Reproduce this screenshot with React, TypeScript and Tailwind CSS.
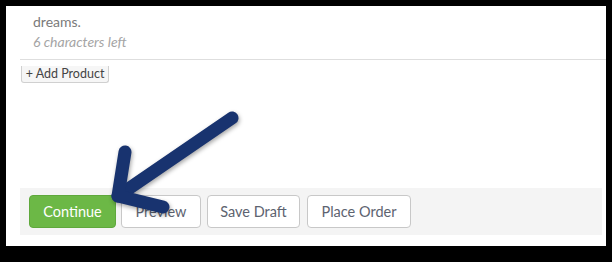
export default function App() {
  return (
    <div className="w-[612px] h-[262px] bg-black pt-[6px] pl-[6px] font-['Lato',sans-serif]">
      <div className="relative w-[600px] h-[240px] bg-white overflow-hidden">
        <div className="pl-[27px] pt-[6px] text-[14px] leading-[20px]">
          <p className="text-[#7a7a7a]">dreams.</p>
          <p className="italic text-[#a5a5a5]">6 characters left</p>
        </div>
        <div className="ml-[14px] mt-[7px] border-t border-[#dedede]">
          <button className="ml-[1px] h-[17px] w-[88px] -mt-px border border-t-0 border-[#d0d0d0] rounded-b-[3px] bg-[#f6f6f6] text-[12.5px] leading-[16px] text-[#444]">
            + Add Product
          </button>
        </div>
        <div className="mt-[104px] ml-[14px] mr-[4px] h-[47px] bg-[#f4f4f4] pl-[9px] pt-[7px] flex">
          <button className="w-[87px] h-[33px] rounded-[4px] bg-[#6cb846] border border-[#5fa83c] text-white text-[14.5px]">
            Continue
          </button>
          <button className="ml-[5px] w-[80px] h-[33px] rounded-[4px] bg-white border border-[#c8c8c8] text-[#5d6370] text-[14.5px]">
            Preview
          </button>
          <button className="ml-[6px] w-[93px] h-[33px] rounded-[4px] bg-white border border-[#c8c8c8] text-[#5d6370] text-[14.5px]">
            Save Draft
          </button>
          <button className="ml-[7px] w-[104px] h-[33px] rounded-[4px] bg-white border border-[#c8c8c8] text-[#5d6370] text-[14.5px]">
            Place Order
          </button>
        </div>
        <svg
          className="absolute left-0 top-0 drop-shadow-[1px_2px_2px_rgba(0,0,0,0.35)]"
          width="600"
          height="240"
          viewBox="0 0 600 240"
        >
          <g stroke="#18336f" strokeWidth="13" strokeLinecap="round" strokeLinejoin="round" fill="none">
            <line x1="226" y1="112" x2="112" y2="190" />
            <polyline points="119,146 112,190 157,201" />
          </g>
        </svg>
      </div>
    </div>
  );
}
